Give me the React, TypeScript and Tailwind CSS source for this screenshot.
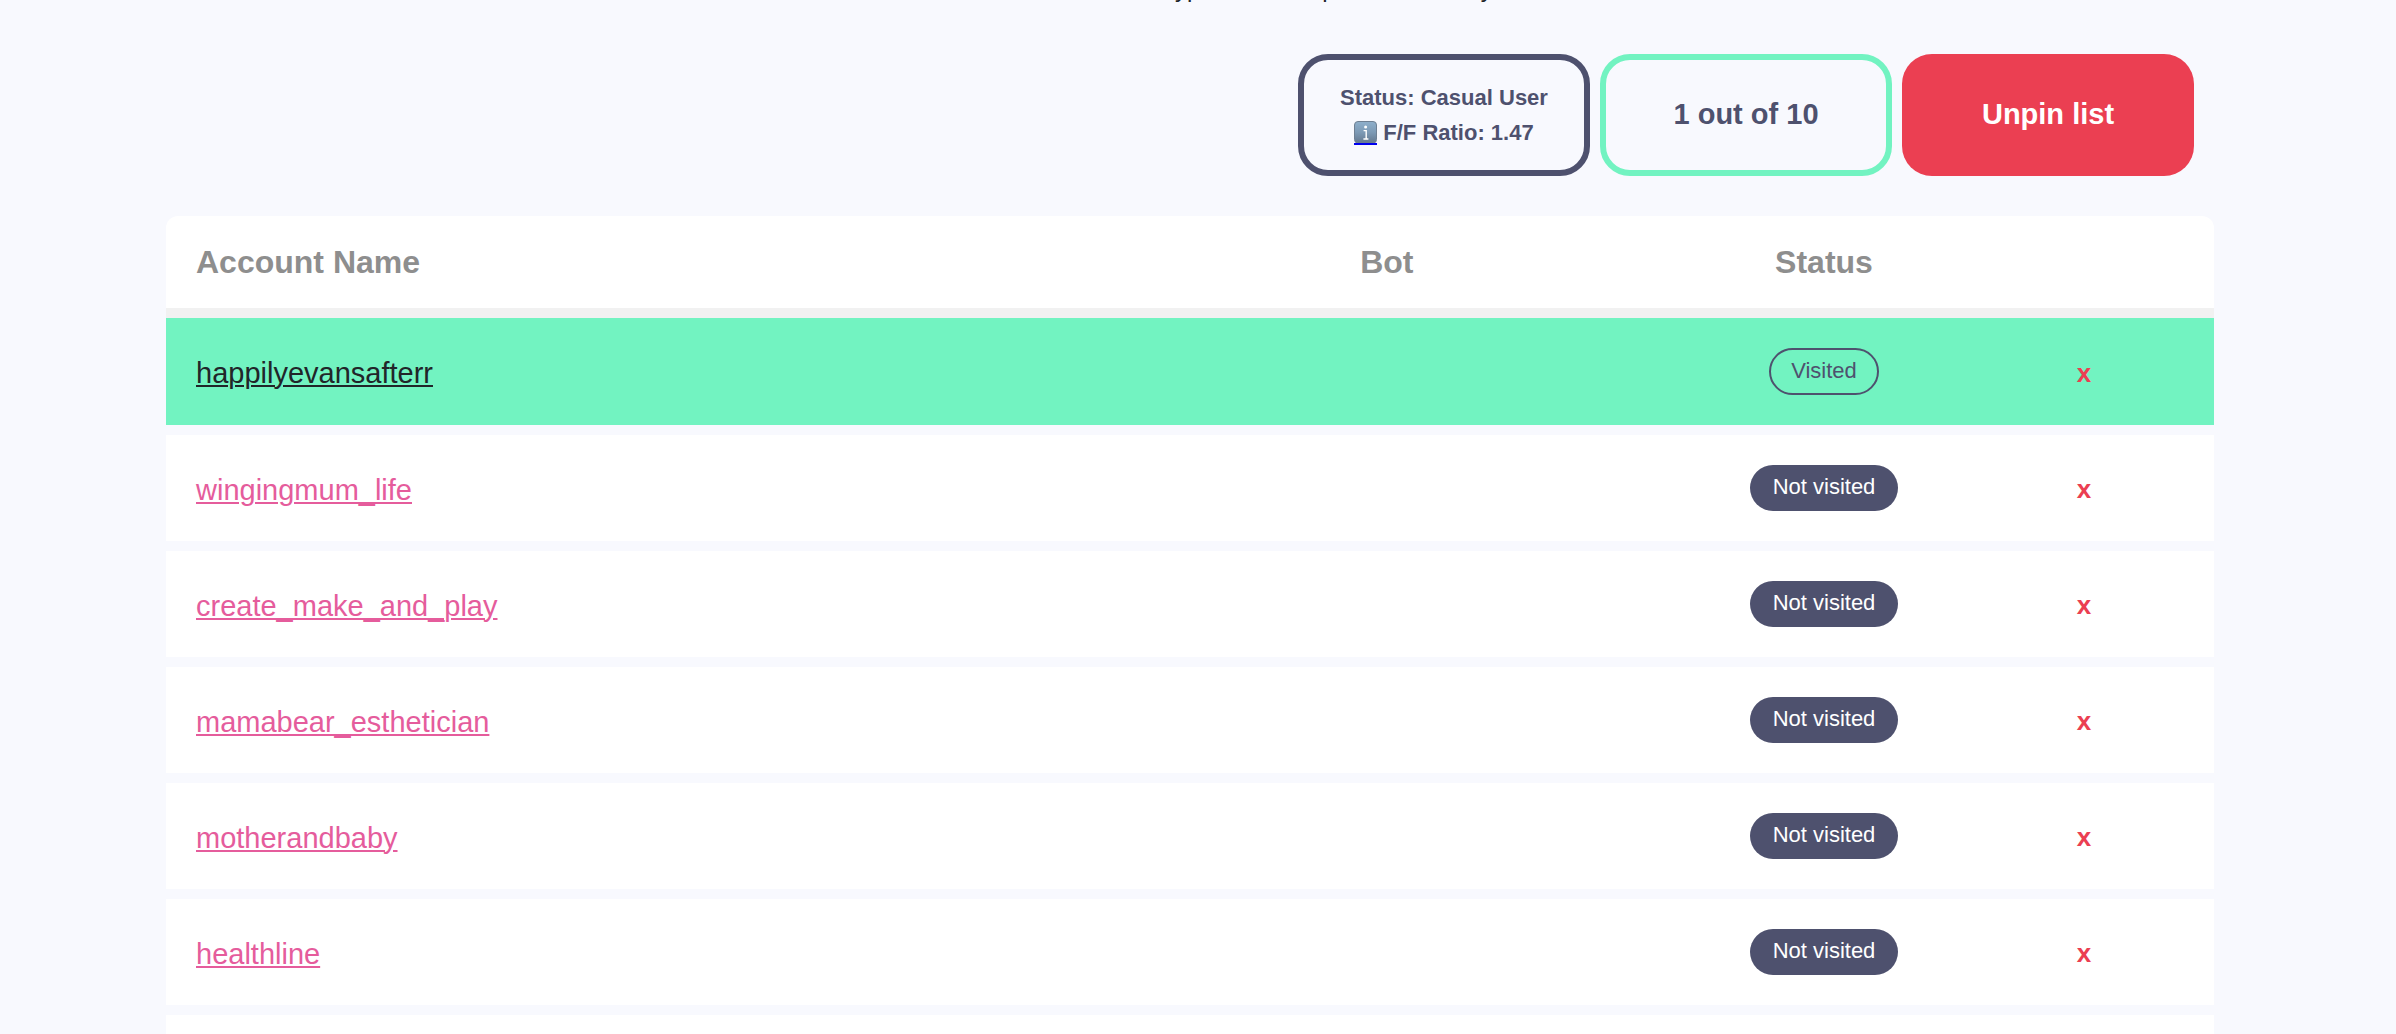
import React, { useState } from 'react';

interface Account {
    name: string;
    visited: boolean;
}

const INITIAL_ACCOUNTS: Account[] = [
    { name: 'happilyevansafterr', visited: true },
    { name: 'wingingmum_life', visited: false },
    { name: 'create_make_and_play', visited: false },
    { name: 'mamabear_esthetician', visited: false },
    { name: 'motherandbaby', visited: false },
    { name: 'healthline', visited: false },
];

const InfoIcon: React.FC = () => (
    <svg className="block h-[22px] w-[23px]" viewBox="0 0 23 22" aria-hidden="true">
        <defs>
            <linearGradient id="info-bg" x1="0" y1="0" x2="0" y2="1">
                <stop offset="0" stopColor="#8fb0cc" />
                <stop offset="0.5" stopColor="#7d9ab5" />
                <stop offset="1" stopColor="#64788f" />
            </linearGradient>
        </defs>
        <rect x="0.5" y="0.5" width="22" height="21.5" rx="3.5" fill="url(#info-bg)" stroke="#6f8093" />
        <circle cx="11.6" cy="6" r="1.5" fill="#fff" />
        <path d="M9.6 9.6h2.6v8.2M9.4 18h5" fill="none" stroke="#fff" strokeWidth="1.4" />
    </svg>
);

const StatusPill: React.FC<{ visited: boolean }> = ({ visited }) =>
    visited ? (
        <span className="inline-block rounded-full border-2 border-[#4e516e] px-5 pt-[9px] pb-[11px] align-top text-[22px] leading-[23px] text-[#4e516e]">
            Visited
        </span>
    ) : (
        <span className="inline-block rounded-full bg-[#4e516e] px-[23px] pt-[9px] pb-[11px] align-top text-[22px] leading-[26px] text-white">
            Not visited
        </span>
    );

export default function App() {
    const [accounts, setAccounts] = useState(INITIAL_ACCOUNTS);

    const visit = (name: string) =>
        setAccounts(prev => prev.map(a => (a.name === name ? { ...a, visited: true } : a)));
    const remove = (name: string) => setAccounts(prev => prev.filter(a => a.name !== name));

    const visitedCount = accounts.filter(a => a.visited).length;

    return (
        <div className="h-screen overflow-hidden bg-[#f8f9fe] pr-4 font-['Liberation_Sans',Arial,sans-serif]">
            <main className="mx-auto max-w-[2048px]">
                {/* Tail of the intro line that is scrolled off the top */}
                <div className="flex h-[2px] items-end overflow-hidden pl-[1009px] text-[24px] leading-[26px] text-[#212529]" aria-hidden="true">
                    <span className="mr-[122px]">yp</span>
                    <span className="mr-[145px]">p</span>
                    <span>y</span>
                </div>

                {/* Summary boxes */}
                <div className="flex justify-end gap-2.5 px-5 pt-[52px] pb-10 font-bold">
                    <div className="flex h-[122px] w-[292px] flex-col items-center justify-center rounded-[30px] border-6 border-[#4e516e] text-[22px] leading-[35px] text-[#4e516e]">
                        <p>Status: Casual User</p>
                        <p className="flex items-center gap-1.5">
                            <a href="#ratio" aria-label="About the F/F ratio" className="border-b-2 border-[#0000ee]">
                                <InfoIcon />
                            </a>
                            F/F Ratio: 1.47
                        </p>
                    </div>
                    <div className="flex h-[122px] w-[292px] items-center justify-center rounded-[30px] border-6 border-[#72f3c1] text-[29px] text-[#4e516e]">
                        {visitedCount} out of 10
                    </div>
                    <button type="button" className="h-[122px] w-[292px] cursor-pointer rounded-[30px] bg-[#eb3f52] text-[29px] text-white">
                        Unpin list
                    </button>
                </div>

                {/* Accounts */}
                <table className="w-full table-fixed border-separate border-spacing-0">
                    <colgroup>
                        <col />
                        <col className="w-[30%]" />
                        <col className="w-[260px]" />
                        <col className="w-[260px]" />
                    </colgroup>
                    <thead>
                        <tr className="h-[102px] text-[32px] leading-8 text-[#8e8e8e]">
                            <th scope="col" className="rounded-tl-xl border-b-10 border-[#f1f1f1] bg-white px-[30px] text-left">Account Name</th>
                            <th scope="col" className="border-b-10 border-[#f1f1f1] bg-white">Bot</th>
                            <th scope="col" className="border-b-10 border-[#f1f1f1] bg-white">Status</th>
                            <th scope="col" aria-label="Remove" className="rounded-tr-xl border-b-10 border-[#f1f1f1] bg-white"></th>
                        </tr>
                    </thead>
                    <tbody>
                        {accounts.map(({ name, visited }) => (
                            <tr key={name} className={visited ? 'bg-[#72f3c1]' : 'bg-white'}>
                                <td className="border-b-10 border-[#f8f9fe] px-[30px] pt-1">
                                    <a
                                        href={`#${name}`}
                                        onClick={() => visit(name)}
                                        className={`text-[29px] leading-[32px] underline decoration-2 underline-offset-2 ${visited ? 'text-[#212529]' : 'text-[#e55c9c]'}`}
                                    >
                                        {name}
                                    </a>
                                </td>
                                <td className="border-b-10 border-[#f8f9fe]"></td>
                                <td className="border-b-10 border-[#f8f9fe] py-[30px] text-center">
                                    <StatusPill visited={visited} />
                                </td>
                                <td className="border-b-10 border-[#f8f9fe] pt-0.5 text-center">
                                    <button
                                        type="button"
                                        aria-label={`Remove ${name}`}
                                        onClick={() => remove(name)}
                                        className="cursor-pointer text-[26px] leading-8 font-bold text-[#eb3f52]"
                                    >
                                        x
                                    </button>
                                </td>
                            </tr>
                        ))}
                        <tr className="h-[116px] bg-white">
                            <td colSpan={4}></td>
                        </tr>
                    </tbody>
                </table>
            </main>
        </div>
    );
}
